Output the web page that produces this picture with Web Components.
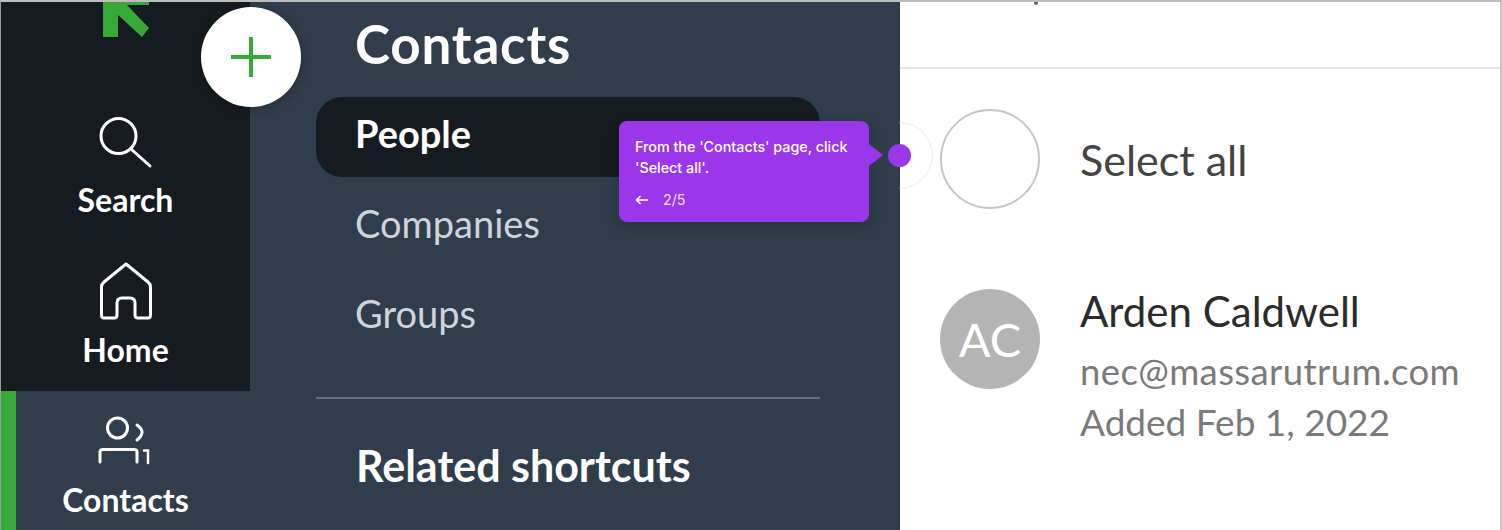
<!DOCTYPE html>
<html>
<head>
<meta charset="utf-8">
<title>Contacts</title>
<style>
html, body { margin: 0; height: 530px; overflow: hidden; background: #fff; }
body { font-family: "Lato", "Liberation Sans", sans-serif; }
</style>
</head>
<body>
<app-shell>
    <side-rail slot="rail">
        <rail-item label="Search" icon="search"></rail-item>
        <rail-item label="Home" icon="home"></rail-item>
        <rail-item label="Contacts" icon="contacts" active></rail-item>
    </side-rail>
    <sub-panel slot="panel" title="Contacts">
        <panel-link active>People</panel-link>
        <panel-link>Companies</panel-link>
        <panel-link>Groups</panel-link>
    </sub-panel>
    <contact-list slot="content">
        <select-row>Select all</select-row>
        <contact-row initials="AC" name="Arden Caldwell" email="nec@massarutrum.com" added="Added Feb 1, 2022"></contact-row>
    </contact-list>
    <add-button slot="overlay"></add-button>
    <guide-tip slot="overlay" step="2/5">From the 'Contacts' page, click<br>'Select all'.</guide-tip>
</app-shell>

<script>
const ICONS = {
    search: `<svg width="56" height="56" viewBox="0 0 56 56" fill="none" stroke="#fff" stroke-width="3" stroke-linecap="round">
        <circle cx="20.500" cy="23" r="17.500"/><path d="M33 36 L52 53"/></svg>`,
    home: `<svg width="56" height="60" viewBox="0 0 56 60" fill="none" stroke="#fff" stroke-width="3" stroke-linejoin="round">
        <path d="M28 3 L50 21 Q52.500 23 52.500 26 V54 Q52.500 57 50 57 H40 Q37 57 37 54 V42 Q37 37 32 37 H24 Q19 37 19 42 V54 Q19 57 16 57 H6 Q3.500 57 3.500 54 V26 Q3.500 23 6 21 Z"/></svg>`,
    contacts: `<svg width="56" height="52" viewBox="0 0 56 52" fill="none" stroke="#fff" stroke-width="3" stroke-linecap="round">
        <circle cx="19.500" cy="13" r="10"/><path d="M39 10 Q49 17 39 25"/>
        <path d="M2 47 V37 Q2 34.500 5 34.500 H36 Q39 34.500 39 37 V47"/><path d="M46 35.500 H50 V48" stroke-width="2.500"/></svg>`
};

class AppShell extends HTMLElement {
    constructor() {
        super();
        this.attachShadow({ mode: 'open' });
        this.shadowRoot.innerHTML = `
            <style>
                :host {
                    display: grid;
                    grid-template-columns: 249px 650px 1fr;
                    position: relative;
                    height: 530px;
                    box-sizing: border-box;
                    border-top: 2px solid #bdbdbd;
                    border-left: 1px solid #9a9a9a;
                    border-right: 2px solid #c4c4c4;
                    overflow: hidden;
                }
            </style>
            <slot name="rail"></slot>
            <slot name="panel"></slot>
            <slot name="content"></slot>
            <slot name="overlay"></slot>
        `;
    }
}

class SideRail extends HTMLElement {
    constructor() {
        super();
        this.attachShadow({ mode: 'open' });
        this.shadowRoot.innerHTML = `
            <style>
                :host {
                    display: flex;
                    flex-direction: column;
                    background: #2f3d4c;
                    overflow: hidden;
                }
                .logo {
                    flex: none;
                    height: 89px;
                    background: #161b22;
                    padding-left: 102px;
                }
                svg { display: block; }
            </style>
            <div class="logo">
                <svg width="46" height="36" viewBox="0 0 46 36"><polygon fill="#36a936" points="0,0 46,0 46,3 24,3 46,26 39,35 15,13 15,35 0,35"/></svg>
            </div>
            <slot></slot>
        `;
    }
}

class RailItem extends HTMLElement {
    constructor() {
        super();
        this.attachShadow({ mode: 'open' });
    }

    connectedCallback() {
        const icon = this.getAttribute('icon');
        this.shadowRoot.innerHTML = `
            <style>
                :host {
                    display: flex;
                    flex: none;
                    flex-direction: column;
                    align-items: center;
                    height: 150px;
                    box-sizing: border-box;
                    padding-top: 20px;
                    background: #161b22;
                    color: #fff;
                    font-size: 32px;
                    font-weight: 700;
                }
                :host([active]) {
                    background: #2f3d4c;
                    box-shadow: inset 15px 0 0 #36a936;
                }
                .icon { height: 60px; display: flex; align-items: center; }
                .label { margin-top: 10px; line-height: 38px; }
                svg { display: block; }
            </style>
            <div class="icon">${ICONS[icon]}</div>
            <div class="label">${this.getAttribute('label')}</div>
        `;
    }
}

class SubPanel extends HTMLElement {
    constructor() {
        super();
        this.attachShadow({ mode: 'open' });
    }

    connectedCallback() {
        this.shadowRoot.innerHTML = `
            <style>
                :host {
                    display: block;
                    background: #2f3d4c;
                    padding: 12px 80px 0 66px;
                    color: #fff;
                }
                h1 {
                    margin: 0 0 23px 39px;
                    font-size: 53px;
                    letter-spacing: 0.8px;
                    line-height: 60px;
                    font-weight: 700;
                }
                .list { display: flex; flex-direction: column; gap: 10px; }
                hr {
                    margin: 40px 0 0;
                    border: 0;
                    border-top: 2px solid #64707d;
                }
                h2 {
                    margin: 42px 0 0 40px;
                    font-size: 43px;
                    line-height: 50px;
                    font-weight: 700;
                }
            </style>
            <h1>${this.getAttribute('title')}</h1>
            <div class="list"><slot></slot></div>
            <hr>
            <h2>Related shortcuts</h2>
        `;
    }
}

class PanelLink extends HTMLElement {
    constructor() {
        super();
        this.attachShadow({ mode: 'open' });
        this.shadowRoot.innerHTML = `
            <style>
                :host {
                    display: flex;
                    align-items: center;
                    height: 80px;
                    padding: 0 39px 9px;
                    box-sizing: border-box;
                    border-radius: 26px;
                    font-size: 38px;
                    color: #cfd4d9;
                }
                :host([active]) {
                    background: #161b22;
                    color: #fff;
                    font-weight: 700;
                }
            </style>
            <slot></slot>
        `;
    }
}

class ContactList extends HTMLElement {
    constructor() {
        super();
        this.attachShadow({ mode: 'open' });
        this.shadowRoot.innerHTML = `
            <style>
                :host {
                    display: block;
                    background: #fff;
                    position: relative;
                }
                .head {
                    height: 65px;
                    border-bottom: 2px solid #e4e4e4;
                    position: relative;
                }
                .mark {
                    position: absolute;
                    left: 134px;
                    top: 0;
                    width: 4px;
                    height: 3px;
                    border-radius: 0 0 2px 2px;
                    background: #666;
                }
                .rows { display: flex; flex-direction: column; gap: 80px; padding: 40px 40px 0; }
            </style>
            <div class="head"><span class="mark"></span></div>
            <div class="rows"><slot></slot></div>
        `;
    }
}

class SelectRow extends HTMLElement {
    constructor() {
        super();
        this.attachShadow({ mode: 'open' });
        this.shadowRoot.innerHTML = `
            <style>
                :host {
                    display: flex;
                    align-items: center;
                    gap: 40px;
                    font-size: 43px;
                    color: #444;
                }
                .check {
                    width: 100px;
                    height: 100px;
                    box-sizing: border-box;
                    border: 2px solid #c6c6c6;
                    border-radius: 50%;
                    flex: none;
                }
            </style>
            <span class="check"></span>
            <span><slot></slot></span>
        `;
    }
}

class ContactRow extends HTMLElement {
    constructor() {
        super();
        this.attachShadow({ mode: 'open' });
    }

    connectedCallback() {
        this.shadowRoot.innerHTML = `
            <style>
                :host { display: flex; gap: 40px; }
                .avatar {
                    width: 100px;
                    height: 100px;
                    border-radius: 50%;
                    background: #b4b4b4;
                    color: #fff;
                    font-size: 47px;
                    display: flex;
                    align-items: center;
                    justify-content: center;
                    flex: none;
                }
                .text { margin-top: -2px; }
                .name { font-size: 42px; line-height: 48px; color: #2b2b2b; white-space: nowrap; }
                .email { font-size: 36.500px; letter-spacing: 0.4px; line-height: 52px; margin-top: 10px; color: #7a7a7a; white-space: nowrap; }
                .added { font-size: 37px; line-height: 50px; color: #7a7a7a; white-space: nowrap; }
            </style>
            <div class="avatar">${this.getAttribute('initials')}</div>
            <div class="text">
                <div class="name">${this.getAttribute('name')}</div>
                <div class="email">${this.getAttribute('email')}</div>
                <div class="added">${this.getAttribute('added')}</div>
            </div>
        `;
    }
}

class AddButton extends HTMLElement {
    constructor() {
        super();
        this.attachShadow({ mode: 'open' });
        this.shadowRoot.innerHTML = `
            <style>
                :host {
                    position: absolute;
                    left: 200px;
                    top: 5px;
                    width: 100px;
                    height: 100px;
                    border-radius: 50%;
                    background: #fff;
                    box-shadow: 0 2px 10px rgba(0, 0, 0, 0.25);
                    display: flex;
                    align-items: center;
                    justify-content: center;
                }
                svg { display: block; }
            </style>
            <svg width="42" height="42" viewBox="0 0 42 42" stroke="#36a936" stroke-width="4"><path d="M21 1 V41 M1 21 H41"/></svg>
        `;
    }
}

class GuideTip extends HTMLElement {
    constructor() {
        super();
        this.attachShadow({ mode: 'open' });
    }

    connectedCallback() {
        this.shadowRoot.innerHTML = `
            <style>
                :host {
                    position: absolute;
                    left: 618px;
                    top: 119px;
                    width: 250px;
                    height: 101px;
                    box-sizing: border-box;
                    padding: 15px 16px 0;
                    background: #9b37ea;
                    border-radius: 8px;
                    color: #fff;
                    font-family: "Inter", "Liberation Sans", sans-serif;
                    font-size: 14.300px;
                    font-weight: 500;
                    line-height: 21px;
                    white-space: nowrap;
                    box-shadow: 0 4px 14px rgba(0, 0, 0, 0.18);
                }
                .foot {
                    display: flex;
                    align-items: center;
                    gap: 15px;
                    margin-top: 11px;
                    font-weight: 400;
                    color: #ecd9fb;
                }
                svg { display: block; }
                .caret {
                    position: absolute;
                    left: 250px;
                    top: 23px;
                    width: 0;
                    height: 0;
                    border-left: 14px solid #9b37ea;
                    border-top: 11px solid transparent;
                    border-bottom: 11px solid transparent;
                }
                .beacon {
                    position: absolute;
                    left: 269px;
                    top: 23px;
                    width: 23px;
                    height: 23px;
                    border-radius: 50%;
                    background: #9b37ea;
                }
                .ring {
                    position: absolute;
                    left: 247px;
                    top: 1px;
                    width: 67px;
                    height: 67px;
                    box-sizing: border-box;
                    border: 1px solid #ececec;
                    border-radius: 50%;
                    clip-path: inset(0 0 0 50%);
                }
            </style>
            <span class="ring"></span>
            <span class="caret"></span>
            <span class="beacon"></span>
            <div><slot></slot></div>
            <div class="foot">
                <svg width="13" height="10" viewBox="0 0 13 10" fill="none" stroke="#fff" stroke-width="1.500"><path d="M13 5 H1.500 M5.500 1 L1.500 5 L5.500 9"/></svg>
                <span>${this.getAttribute('step')}</span>
            </div>
        `;
    }
}

customElements.define('app-shell', AppShell);
customElements.define('side-rail', SideRail);
customElements.define('rail-item', RailItem);
customElements.define('sub-panel', SubPanel);
customElements.define('panel-link', PanelLink);
customElements.define('contact-list', ContactList);
customElements.define('select-row', SelectRow);
customElements.define('contact-row', ContactRow);
customElements.define('add-button', AddButton);
customElements.define('guide-tip', GuideTip);
</script>
</body>
</html>
